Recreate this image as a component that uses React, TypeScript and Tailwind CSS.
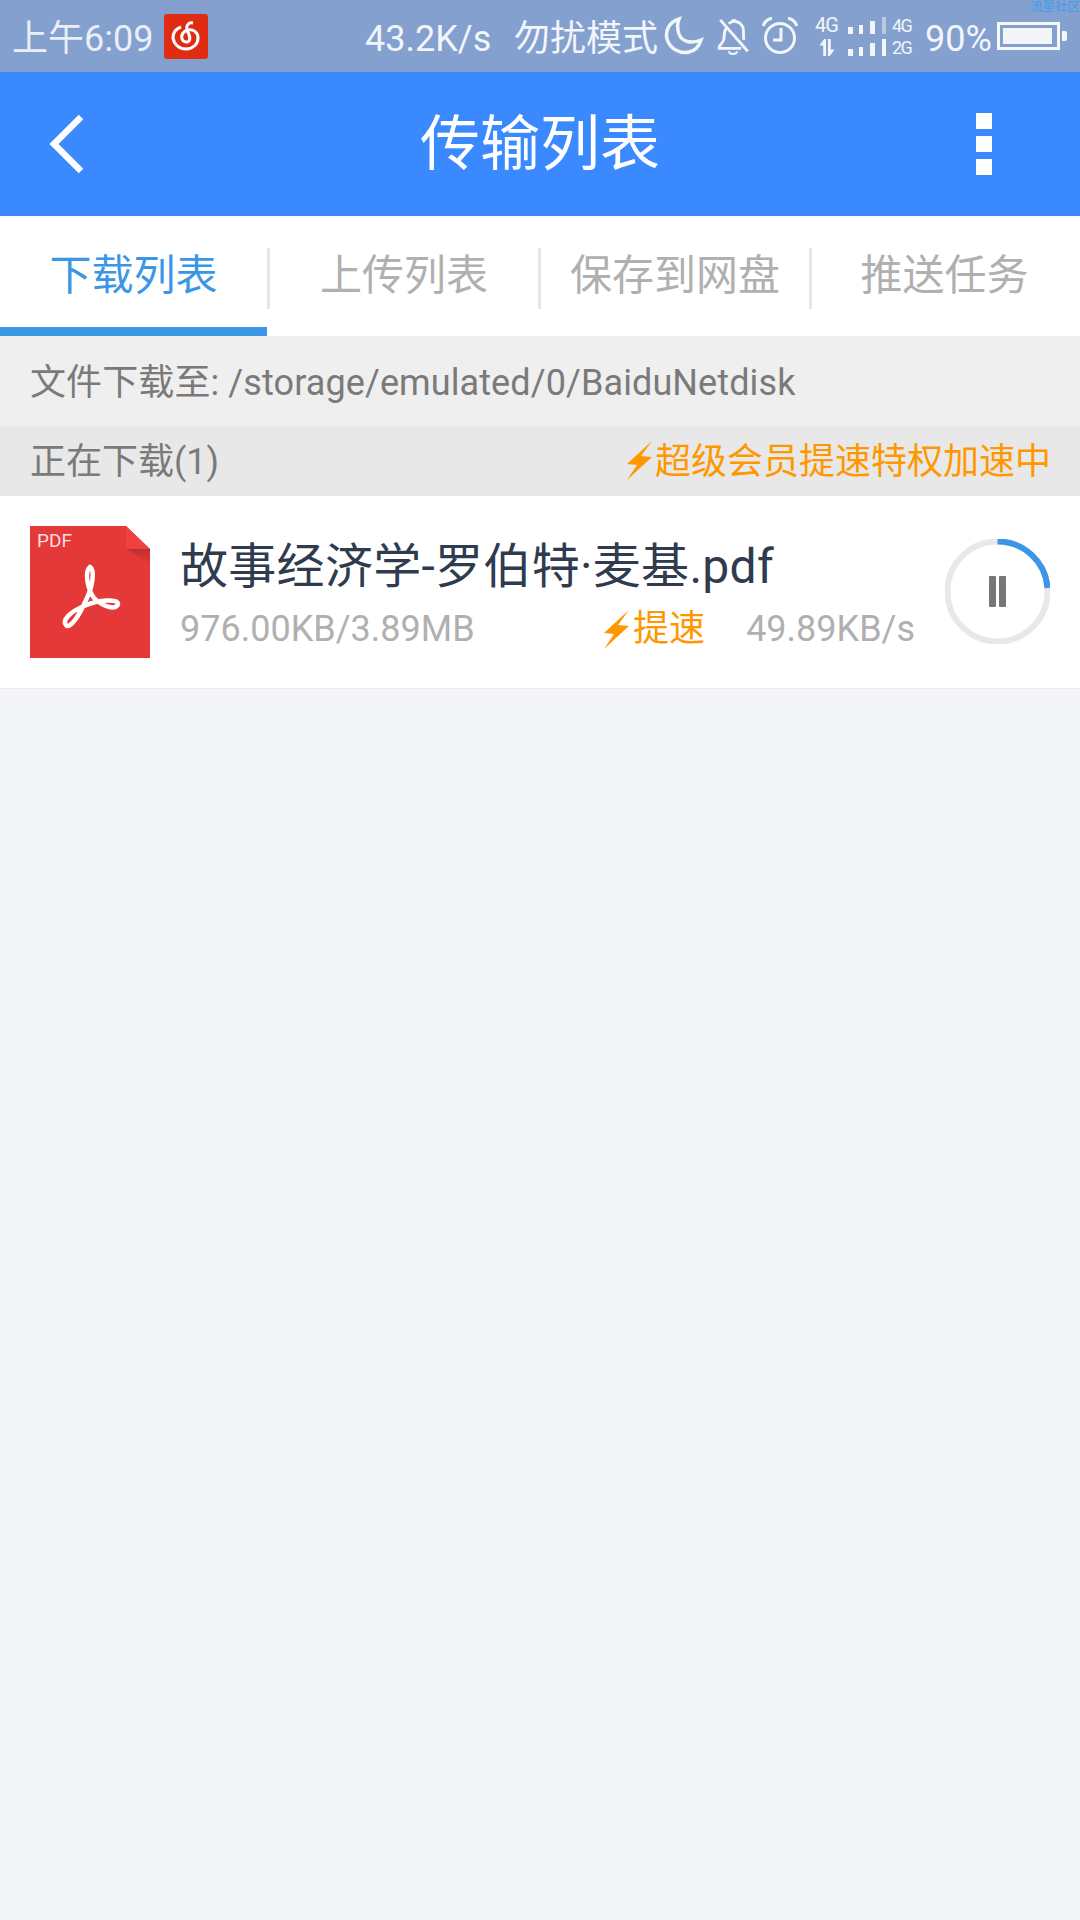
const font = "font-['Roboto','Noto_Sans_CJK_SC',sans-serif]";

function Bolt({ className }: { className: string }) {
  return (
    <svg viewBox="0 0 25 39" className={className}>
      <path d="M25 0 L0 23 L10 24 L0 39 L25 16 L14 15 Z" fill="#ff9800" />
    </svg>
  );
}

function StatusIcons() {
  return (
    <>
      {/* moon */}
      <svg viewBox="0 0 40 40" className="w-[40px] h-[40px] ml-[6px]" fill="none" stroke="#f2f5fa" strokeWidth="3.5">
        <path d="M15 3 C5 6 1 15 3 23 C6 33 16 38 25 36 C31 35 35 30 37 24 C27 28 18 26 15 18 C13 12 13 8 15 3 Z" />
      </svg>
      {/* bell off */}
      <svg viewBox="0 0 34 40" className="w-[33px] h-[38px] ml-[13px]" fill="none" stroke="#f2f5fa" strokeWidth="3">
        <path d="M9 12 C7 16 7 19 7 23 C7 26 4 28 2 31 L2 33 L25 33" />
        <path d="M12 7 C16 3 24 4 27 11 C28 15 27 20 28 24" />
        <path d="M3 3 L32 36" />
        <path d="M12 36 C13 40 20 40 21 36" strokeWidth="2" />
        <path d="M15 6 C15 2 20 2 20 6" strokeWidth="2" />
      </svg>
      {/* alarm */}
      <svg viewBox="0 0 36 38" className="w-[36px] h-[38px] ml-[12px]" fill="none" stroke="#f2f5fa" strokeWidth="3">
        <circle cx="18" cy="21" r="14.5" />
        <path d="M19 11 L19 23 L11 23" />
        <path d="M1 9 C3 4 6 2 10 1" />
        <path d="M35 9 C33 4 30 2 26 1" />
      </svg>
      {/* data arrows with 4G */}
      <div className="w-[23px] ml-[17px] flex flex-col items-center text-[20px] leading-[17px] text-[#f2f5fa] tracking-[-1px] whitespace-nowrap">
        <span>4G</span>
        <svg viewBox="0 0 18 18" className="w-[18px] h-[17px] mt-[5px]" fill="#f2f5fa">
          <path d="M1 7 L6 0 L8 0 L8 18 L5 18 L5 7 Z" />
          <path d="M10 0 L13 0 L13 11 L17 11 L12 18 L10 18 Z" />
        </svg>
      </div>
      {/* signal bars */}
      <div className="ml-[10px] flex flex-col gap-[5px] w-[38px]">
        <svg viewBox="0 0 38 17" className="w-[38px] h-[17px]">
          <rect x="0" y="10" width="5" height="7" fill="#f2f5fa" />
          <rect x="11" y="8" width="4" height="9" fill="#f2f5fa" />
          <rect x="22" y="4" width="5" height="13" fill="#f2f5fa" />
          <rect x="34" y="0" width="4" height="17" fill="#bcc8e0" />
        </svg>
        <svg viewBox="0 0 38 17" className="w-[38px] h-[17px]">
          <rect x="0" y="10" width="5" height="7" fill="#f2f5fa" />
          <rect x="11" y="8" width="4" height="9" fill="#f2f5fa" />
          <rect x="22" y="4" width="5" height="13" fill="#f2f5fa" />
          <rect x="34" y="0" width="4" height="17" fill="#f2f5fa" />
        </svg>
      </div>
      <div className="w-[20px] ml-[6px] flex flex-col text-[18px] leading-[17px] text-[#f2f5fa] tracking-[-1.5px] whitespace-nowrap">
        <span>4G</span>
        <span className="mt-[5px]">2G</span>
      </div>
    </>
  );
}

function StatusBar() {
  return (
    <div className="relative h-[72px] bg-[#84a0cf] flex items-center text-[#f2f5fa] text-[36px] pl-[12px]">
      <span className="w-[138px] pt-[6px] leading-none whitespace-nowrap text-[#e9eef7]">上午6:09</span>
      <div className="w-[44px] h-[45px] ml-[14px] rounded-[3px] bg-[#e12c14] flex items-center justify-center">
        <svg viewBox="0 0 30 30" className="w-[30px] h-[30px]" fill="none" stroke="#fff" strokeWidth="3">
          <path d="M10 6 C4 8 2 13 2 17 C3 24 9 28 15 28 C22 28 27 23 27 17 C27 11 22 8 17 9 C12 10 10 14 11 18 C12 21 16 22 18 20 C20 17 18 13 16 9 C15 5 17 1 22 2" />
        </svg>
      </div>
      <span className="w-[125px] ml-[157px] pt-[6px] leading-none">43.2K/s</span>
      <span className="w-[144px] ml-[24px] pt-[6px] leading-none whitespace-nowrap">勿扰模式</span>
      <StatusIcons />
      <span className="w-[65px] ml-[13px] pt-[6px] leading-none whitespace-nowrap">90%</span>
      <div className="ml-[7px] w-[63px] h-[28px] border-[3px] border-[#f6f8fb] p-[3px] flex">
        <div className="w-[49px] bg-[#f2f5fa]" />
      </div>
      <div className="w-[5px] h-[10px] bg-[#f6f8fb] rounded-r-[2px] ml-[2px]" />
      <span className="absolute right-0 top-0 text-[12.5px] leading-[14px] text-[#3d9df0] whitespace-nowrap">流星社区</span>
    </div>
  );
}

function Header() {
  return (
    <div className="h-[144px] bg-[#3a89ff] grid grid-cols-[1fr_auto_1fr] items-center px-[48px] text-white">
      <svg viewBox="0 0 36 60" className="w-[36px] h-[60px]" fill="none" stroke="#fff" strokeWidth="6.5">
        <path d="M33 3 L6 30 L33 57" />
      </svg>
      <span className="text-[60px] leading-none pt-[2px]">传输列表</span>
      <div className="flex flex-col gap-[7px] justify-self-end mr-[40px]">
        <div className="w-[16px] h-[16px] bg-white" />
        <div className="w-[16px] h-[16px] bg-white" />
        <div className="w-[16px] h-[16px] bg-white" />
      </div>
    </div>
  );
}

const tabs = [
  { label: "下载列表", width: "w-[270px]" },
  { label: "上传列表", width: "w-[271px]" },
  { label: "保存到网盘", width: "w-[271px]" },
  { label: "推送任务", width: "w-[268px]" },
];

function Tabs() {
  return (
    <div className="h-[120px] bg-white flex">
      {tabs.map((tab, index) => (
        <div key={tab.label} className={"relative h-full flex items-center " + tab.width}>
          <span
            className={
              "flex-1 pr-[3px] text-center text-[42px] leading-none " +
              (index === 0 ? "text-[#3b97e6]" : "text-[#b0b0b0]")
            }
          >
            {tab.label}
          </span>
          {index < 3 && (
            <div className="absolute right-0 top-[32px] w-[3px] h-[61px] bg-[#e6e6e6]" />
          )}
          {index === 0 && (
            <div className="absolute left-0 bottom-0 w-[267px] h-[9px] bg-[#3b97e6]" />
          )}
        </div>
      ))}
    </div>
  );
}

function FileRow() {
  return (
    <div className="h-[193px] bg-white border-b border-[#ececee] flex pl-[30px] pr-[30px]">
      <svg viewBox="0 0 120 132" className="w-[120px] h-[132px] mt-[30px] shrink-0">
        <defs>
          <linearGradient id="foldShadow" x1="0" y1="0" x2="0" y2="1">
            <stop offset="0" stopColor="#bd3030" />
            <stop offset="1" stopColor="#e53838" />
          </linearGradient>
        </defs>
        <path d="M0 0 L96 0 L120 23 L120 132 L0 132 Z" fill="#e53838" />
        <path d="M96 0 L120 23 L96 23 Z" fill="#f04040" />
        <path d="M96 23 L120 23 L120 38 Z" fill="url(#foldShadow)" />
        <path
          d="M60 41 C65 44 63 60 56 74 C50 88 40 104 36 99 C32 94 40 86 54 80 C70 73 88 73 88 78 C87 84 74 82 64 72 C58 64 54 46 60 41 Z"
          fill="none"
          stroke="#fff"
          strokeWidth="4.5"
        />
        <text x="7" y="21" fontSize="19" fill="#fbdede" fontFamily="Roboto, sans-serif">
          PDF
        </text>
      </svg>
      <div className="ml-[30px] flex-1 pr-[30px]">
        <div className="mt-[41px] text-[48px] leading-[60px] tracking-[0.3px] text-[#2f3b4e] whitespace-nowrap">故事经济学-罗伯特·麦基.pdf</div>
        <div className="mt-[9px] flex items-center text-[36px] leading-[46px] text-[#b0b0b0] whitespace-nowrap">
          <span>976.00KB/3.89MB</span>
          <Bolt className="w-[25px] h-[39px] ml-auto" />
          <span className="text-[#ff9800] ml-[4px]">提速</span>
          <span className="ml-[41px]">49.89KB/s</span>
        </div>
      </div>
      <svg viewBox="0 0 105 105" className="w-[105px] h-[105px] mt-[43px] shrink-0" fill="none">
        <circle cx="52.5" cy="52.5" r="50" stroke="#e8e8e8" strokeWidth="6" />
        <path d="M52.5 2.5 A50 50 0 0 1 102.5 49" stroke="#3b97e6" strokeWidth="6" />
        <rect x="44" y="37" width="7" height="31" rx="1" fill="#777777" />
        <rect x="54" y="37" width="7" height="31" rx="1" fill="#777777" />
      </svg>
    </div>
  );
}

export default function App() {
  return (
    <div className={font + " w-[1080px] h-[1920px] bg-[#f4f5f7] flex flex-col overflow-hidden"}>
      <StatusBar />
      <Header />
      <Tabs />
      <div className="h-[90px] bg-[#efefef] flex items-center pl-[30px] pt-[3px] text-[36px] tracking-[0.1px] text-[#7a7a7a] border-t border-[#ebebeb]">
        文件下载至: /storage/emulated/0/BaiduNetdisk
      </div>
      <div className="h-[70px] bg-[#e8e8e8] flex items-center pl-[30px] pr-[29px] pt-[2px] text-[36px] text-[#7a7a7a]">
        <span>正在下载(1)</span>
        <Bolt className="w-[25px] h-[39px] ml-auto mb-[4px]" />
        <span className="text-[#ff9800] ml-[3px]">超级会员提速特权加速中</span>
      </div>
      <FileRow />
    </div>
  );
}
